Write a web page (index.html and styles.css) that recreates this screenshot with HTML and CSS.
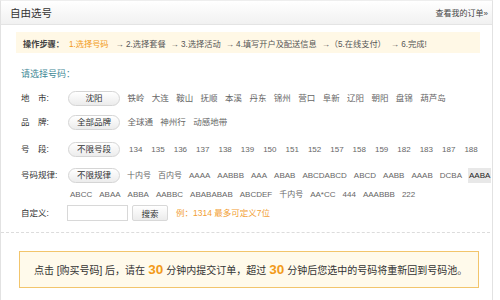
FILE: index.html
```html
<!DOCTYPE html>
<html lang="zh-CN">
<head>
    <meta charset="UTF-8">
    <title>自由选号</title>
    <link rel="stylesheet" href="styles.css">
</head>
<body>
    <div class="panel">
        <div class="panel-head">
            <h2>自由选号</h2>
            <a class="order-link" href="#">查看我的订单»</a>
        </div>

        <div class="steps">
            <b>操作步骤：</b>
            <span class="on">1.选择号码</span>
            <span>→ 2.选择套餐</span>
            <span>→ 3.选择活动</span>
            <span>→ 4.填写开户及配送信息</span>
            <span>→（5.在线支付）</span>
            <span>→ 6.完成!</span>
        </div>

        <div class="picker">
            <h3>请选择号码：</h3>

            <div class="row">
                <span class="label">地　市:</span>
                <div class="opts">
                    <span class="pill">沈阳</span>
                    <a>铁岭</a><a>大连</a><a>鞍山</a><a>抚顺</a><a>本溪</a><a>丹东</a><a>锦州</a>
                    <a>营口</a><a>阜新</a><a>辽阳</a><a>朝阳</a><a>盘锦</a><a>葫芦岛</a>
                </div>
            </div>

            <div class="row">
                <span class="label">品　牌:</span>
                <div class="opts">
                    <span class="pill">全部品牌</span>
                    <a>全球通</a><a>神州行</a><a>动感地带</a>
                </div>
            </div>

            <div class="row">
                <span class="label">号　段:</span>
                <div class="opts nums">
                    <span class="pill">不限号段</span>
                    <a>134</a><a>135</a><a>136</a><a>137</a><a>138</a><a>139</a><a>150</a><a>151</a>
                    <a>152</a><a>157</a><a>158</a><a>159</a><a>182</a><a>183</a><a>187</a><a>188</a>
                </div>
            </div>

            <div class="row">
                <span class="label">号码规律:</span>
                <div class="opts rules">
                    <span class="pill">不限规律</span>
                    <a>十内号</a><a>百内号</a><a>AAAA</a><a>AABBB</a><a>AAA</a><a>ABAB</a><a>ABCDABCD</a>
                    <a>ABCD</a><a>AABB</a><a>AAAB</a><a>DCBA</a><a class="cur">AABA</a>
                    <a class="first">ABCC</a><a>ABAA</a><a>ABBA</a><a>AABBC</a><a>ABABABAB</a><a>ABCDEF</a>
                    <a>千内号</a><a>AA*CC</a><a>444</a><a>AAABBB</a><a>222</a>
                </div>
            </div>

            <div class="row custom">
                <span class="label">自定义:</span>
                <div class="opts">
                    <input type="text" class="num-input">
                    <button class="btn-search">搜索</button>
                    <span class="hint">例：1314 最多可定义7位</span>
                </div>
            </div>
        </div>

        <div class="divider"></div>

        <div class="notice">
            点击 [购买号码] 后，请在 <em>30</em> 分钟内提交订单，超过 <em>30</em> 分钟后您选中的号码将重新回到号码池。
        </div>
    </div>
</body>
</html>
```

FILE: styles.css
```css
body {
    margin: 0;
    font-family: "Liberation Sans", Arial, "Noto Sans CJK SC", sans-serif;
    color: #333;
    background: #fff;
}

.panel {
    width: 493px;
    height: 310px;
    border: 1px solid #e2e2e2;
    border-top-color: #eee;
    box-sizing: border-box;
}

.panel-head {
    display: flex;
    justify-content: space-between;
    align-items: center;
    height: 23px;
    padding: 0 4px 0 9px;
    background: linear-gradient(to bottom, #ffffff, #f1f1f1);
    border-bottom: 1px solid #e4e4e4;
}

.panel-head h2 {
    margin: 0;
    font-size: 10.5px;
    font-weight: normal;
    color: #333;
}

.order-link {
    font-size: 8px;
    color: #444;
    text-decoration: none;
}

.steps {
    margin: 7px 12px 0 15px;
    height: 21px;
    padding-left: 7px;
    display: flex;
    align-items: center;
    gap: 5px;
    background: #fff8e6;
    font-size: 8.2px;
    color: #555;
}

.steps b {
    color: #444;
}

.steps .on {
    color: #f29a1a;
    margin-right: 2px;
}

.picker {
    padding: 14px 0 0 20px;
}

.picker h3 {
    margin: 0 0 11px;
    font-size: 9px;
    font-weight: normal;
    color: #3f8996;
}

.row {
    display: flex;
    align-items: flex-start;
    margin-bottom: 9px;
    font-size: 8.5px;
}

.row:nth-of-type(2) {
    margin-bottom: 12px;
}

.row:nth-of-type(3) {
    margin-bottom: 11px;
}

.row:nth-of-type(4) {
    margin-bottom: 3px;
}

.label {
    width: 47px;
    flex-shrink: 0;
    line-height: 15px;
    color: #333;
}

.opts {
    display: flex;
    flex-wrap: wrap;
    align-items: center;
    column-gap: 7.4px;
    row-gap: 4px;
    color: #666;
    line-height: 15px;
}

.opts a {
    cursor: pointer;
}

.nums {
    font-size: 8px;
    column-gap: 9px;
}

.rules {
    column-gap: 7px;
    width: 428px;
    flex-shrink: 0;
    font-size: 8px;
}

.rules a {
    font-size: 8px;
}

.rules .first {
    margin-left: 2px;
}

.rules .cur {
    background: #e8e8e8;
    color: #222;
    padding: 0 1px;
    margin-left: -1px;
}

.pill {
    width: 52px;
    height: 15px;
    box-sizing: border-box;
    border: 1px solid #d5d5d5;
    border-radius: 8px;
    background: linear-gradient(to bottom, #ffffff, #ececec);
    text-align: center;
    line-height: 13px;
    font-size: 8.5px;
    color: #333;
}

.custom .label {
    line-height: 16px;
}

.custom .opts {
    column-gap: 4px;
}

.num-input {
    width: 61px;
    height: 16px;
    box-sizing: border-box;
    border: 1px solid #d8d8d8;
    margin: 0 0 0 -1px;
    padding: 0;
}

.btn-search {
    width: 36px;
    height: 16px;
    border: 1px solid #d8d8d8;
    border-radius: 2px;
    background: linear-gradient(to bottom, #ffffff, #ececec);
    font-family: inherit;
    font-size: 8.5px;
    color: #333;
    padding: 0;
}

.hint {
    margin-left: 4px;
    color: #f2a035;
}

.divider {
    margin: 11px 2px 0 0;
    border-top: 1px dashed #dcdcdc;
}

.notice {
    margin: 18px 13px 0 18px;
    height: 37px;
    box-sizing: border-box;
    border: 1px solid #f2c56c;
    background: #fffaeb;
    padding-left: 14px;
    display: flex;
    align-items: center;
    font-size: 10px;
    color: #333;
    white-space: nowrap;
}

.notice em {
    font-style: normal;
    font-weight: bold;
    font-size: 13.5px;
    color: #f29a1a;
    margin: 0 3px;
}
```
